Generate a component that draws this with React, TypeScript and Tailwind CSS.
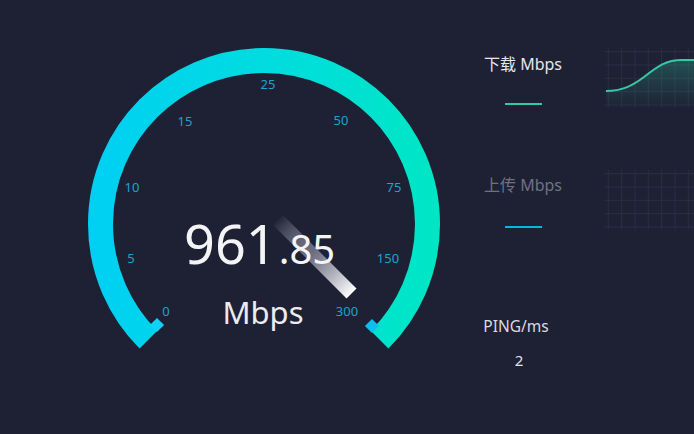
import React from "react";

const ticks = [
  { v: "0", x: 166, y: 311 },
  { v: "5", x: 131, y: 258 },
  { v: "10", x: 132, y: 187 },
  { v: "15", x: 185, y: 121 },
  { v: "25", x: 268, y: 84 },
  { v: "50", x: 341, y: 120 },
  { v: "75", x: 394, y: 187 },
  { v: "150", x: 388, y: 258 },
  { v: "300", x: 347, y: 311 },
];

function Gauge() {
  // center (264,224), mid radius 163.5, arc spans 270deg
  return (
    <svg className="absolute inset-0" width={470} height={434} viewBox="0 0 470 434">
      <defs>
        <linearGradient id="arcGrad" x1="88" y1="0" x2="440" y2="0" gradientUnits="userSpaceOnUse">
          <stop offset="0" stopColor="#00cff3" />
          <stop offset="0.5" stopColor="#00dce0" />
          <stop offset="1" stopColor="#00e6c3" />
        </linearGradient>
        <linearGradient id="needleGrad" x1="0" y1="0" x2="1" y2="0">
          <stop offset="0" stopColor="#ffffff" stopOpacity="0.02" />
          <stop offset="0.45" stopColor="#8a8ca0" stopOpacity="0.7" />
          <stop offset="1" stopColor="#ffffff" />
        </linearGradient>
      </defs>
      <path
        d="M148.4 339.6 A163.5 163.5 0 1 1 379.6 339.6"
        fill="none"
        stroke="url(#arcGrad)"
        strokeWidth={25}
      />
      <rect x={-5} y={-5} width={10} height={10} fill="#12d2f4" transform="translate(157 325) rotate(45)" />
      <rect x={-5} y={-5} width={10} height={10} fill="#0cbfee" transform="translate(372 326) rotate(45)" />
      <rect
        x={0}
        y={-7}
        width={104}
        height={14}
        fill="url(#needleGrad)"
        transform="translate(278 220) rotate(45)"
      />
      {ticks.map((t) => (
        <text
          key={t.v}
          x={t.x}
          y={t.y}
          textAnchor="middle"
          dominantBaseline="central"
          fill="#1ba4cf"
          fontSize={13}
          fontFamily="'Noto Sans', sans-serif"
        >
          {t.v}
        </text>
      ))}
    </svg>
  );
}

function Chart({ curve }: { curve?: boolean }) {
  const vx = [4.3, 17.7, 31, 44.3, 57.7, 71, 84.3, 97.7];
  const hy = [3.7, 17, 30.3, 43.7, 57];
  return (
    <svg width={100} height={62} viewBox="0 0 100 62" className="shrink-0">
      <defs>
        <linearGradient id="fillGrad" x1="0" y1="0" x2="0" y2="1">
          <stop offset="0" stopColor="#2fc8a0" stopOpacity="0.28" />
          <stop offset="1" stopColor="#2fc8a0" stopOpacity="0" />
        </linearGradient>
      </defs>
      {vx.map((x) => (
        <line key={"v" + x} x1={x} y1={0} x2={x} y2={60} stroke="#2b2f42" strokeWidth={1} />
      ))}
      {hy.map((y) => (
        <line key={"h" + y} x1={0} y1={y} x2={100} y2={y} stroke="#2b2f42" strokeWidth={1} />
      ))}
      {curve && (
        <>
          <path
            d="M2 43 C18 43 28 38 40 29 C54 18 62 12 78 12 L100 12 L100 60 L2 60 Z"
            fill="url(#fillGrad)"
          />
          <path
            d="M2 43 C18 43 28 38 40 29 C54 18 62 12 78 12 L100 12"
            fill="none"
            stroke="#36c9a3"
            strokeWidth={2}
          />
        </>
      )}
    </svg>
  );
}

export default function App() {
  return (
    <div
      className="w-[694px] h-[434px] bg-[#1e2134] flex overflow-hidden"
      style={{ fontFamily: "'Noto Sans', 'Noto Sans CJK SC', sans-serif" }}
    >
      <div className="relative w-[470px] h-[434px] shrink-0">
        <Gauge />
        <div className="absolute left-[184px] top-[216px] flex items-baseline text-[#f4f4f6] leading-none">
          <span className="text-[54px]">961</span>
          <span className="text-[40px] ml-[2px]">.85</span>
        </div>
        <div className="absolute left-[163px] w-[200px] top-[297px] text-center text-[31px] leading-none text-[#ececf0]">
          Mbps
        </div>
      </div>

      <div className="flex flex-col pt-[48px]">
        <div className="flex h-[122px]">
          <div className="w-[106px] flex flex-col items-center pt-[6px]">
            <span className="text-[16px] leading-[20px] text-[#e6e6ec]">下载 Mbps</span>
            <div className="mt-[29px] w-[37px] h-[2px] bg-[#33c9a5]" />
          </div>
          <div className="ml-[28px]">
            <Chart curve />
          </div>
        </div>
        <div className="flex h-[146px]">
          <div className="w-[106px] flex flex-col items-center pt-[5px]">
            <span className="text-[16px] leading-[20px] text-[#6e7184]">上传 Mbps</span>
            <div className="mt-[31px] w-[37px] h-[2px] bg-[#08b8da]" />
          </div>
          <div className="ml-[28px]">
            <Chart />
          </div>
        </div>
        <div className="w-[92px] flex flex-col items-center">
          <span className="text-[15.5px] leading-[20px] text-[#dadae2]">PING/ms</span>
          <span className="mt-[14px] ml-[6px] text-[15px] leading-[20px] text-[#e2e2e8]">2</span>
        </div>
      </div>
    </div>
  );
}
